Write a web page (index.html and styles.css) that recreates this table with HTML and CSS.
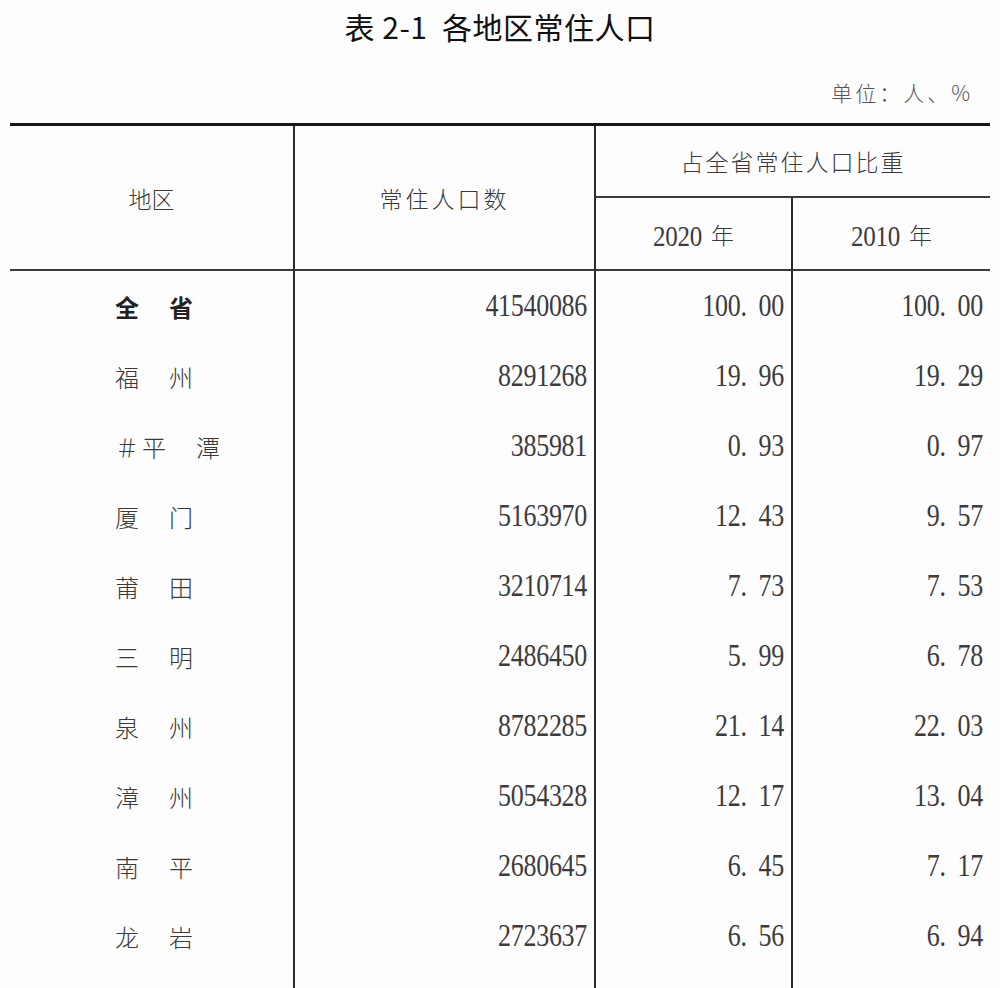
FILE: index.html
```html
<!DOCTYPE html>
<html lang="zh-CN">
<head>
<meta charset="utf-8">
<title>表 2-1 各地区常住人口</title>
<link rel="stylesheet" href="styles.css">
</head>
<body>
<h1 class="title">表 2-1&nbsp; 各地区常住人口</h1>
<div class="unit">单位：人、%</div>
<table class="pop">
  <colgroup>
    <col class="c1"><col class="c2"><col class="c3"><col class="c4">
  </colgroup>
  <thead>
    <tr class="h1">
      <th rowspan="2" class="hd bb">地区</th>
      <th rowspan="2" class="hd bl bb spaced">常住人口数</th>
      <th colspan="2" class="hd bl bb spaced1">占全省常住人口比重</th>
    </tr>
    <tr class="h2">
      <th class="hd bl bb"><span class="num">2020</span> 年</th>
      <th class="hd bl bb"><span class="num">2010</span> 年</th>
    </tr>
  </thead>
  <tbody>
    <tr><td class="lab strong">全　省</td><td class="n bl"><span class="num">41540086</span></td><td class="n bl"><span class="num">100<span class="dot">.</span>00</span></td><td class="n bl"><span class="num">100<span class="dot">.</span>00</span></td></tr>
    <tr><td class="lab">福　州</td><td class="n bl"><span class="num">8291268</span></td><td class="n bl"><span class="num">19<span class="dot">.</span>96</span></td><td class="n bl"><span class="num">19<span class="dot">.</span>29</span></td></tr>
    <tr><td class="lab">＃平　潭</td><td class="n bl"><span class="num">385981</span></td><td class="n bl"><span class="num">0<span class="dot">.</span>93</span></td><td class="n bl"><span class="num">0<span class="dot">.</span>97</span></td></tr>
    <tr><td class="lab">厦　门</td><td class="n bl"><span class="num">5163970</span></td><td class="n bl"><span class="num">12<span class="dot">.</span>43</span></td><td class="n bl"><span class="num">9<span class="dot">.</span>57</span></td></tr>
    <tr><td class="lab">莆　田</td><td class="n bl"><span class="num">3210714</span></td><td class="n bl"><span class="num">7<span class="dot">.</span>73</span></td><td class="n bl"><span class="num">7<span class="dot">.</span>53</span></td></tr>
    <tr><td class="lab">三　明</td><td class="n bl"><span class="num">2486450</span></td><td class="n bl"><span class="num">5<span class="dot">.</span>99</span></td><td class="n bl"><span class="num">6<span class="dot">.</span>78</span></td></tr>
    <tr><td class="lab">泉　州</td><td class="n bl"><span class="num">8782285</span></td><td class="n bl"><span class="num">21<span class="dot">.</span>14</span></td><td class="n bl"><span class="num">22<span class="dot">.</span>03</span></td></tr>
    <tr><td class="lab">漳　州</td><td class="n bl"><span class="num">5054328</span></td><td class="n bl"><span class="num">12<span class="dot">.</span>17</span></td><td class="n bl"><span class="num">13<span class="dot">.</span>04</span></td></tr>
    <tr><td class="lab">南　平</td><td class="n bl"><span class="num">2680645</span></td><td class="n bl"><span class="num">6<span class="dot">.</span>45</span></td><td class="n bl"><span class="num">7<span class="dot">.</span>17</span></td></tr>
    <tr><td class="lab">龙　岩</td><td class="n bl"><span class="num">2723637</span></td><td class="n bl"><span class="num">6<span class="dot">.</span>56</span></td><td class="n bl"><span class="num">6<span class="dot">.</span>94</span></td></tr>
    <tr class="filler"><td></td><td class="bl"></td><td class="bl"></td><td class="bl"></td></tr>
  </tbody>
</table>
</body>
</html>
```
FILE: styles.css
```css
html, body {
  margin: 0;
  padding: 0;
  background: #fdfdfe;
}
body {
  font-family: "Noto Sans CJK SC", "Liberation Sans", sans-serif;
  color: #333;
  overflow: hidden;
  height: 988px;
}
.title {
  margin: 0;
  height: 52px;
  line-height: 52px;
  text-align: center;
  font-size: 30px;
  font-weight: 400;
  color: #111;
  letter-spacing: 0.5px;
}
.unit {
  margin-top: 25px;
  height: 30px;
  line-height: 30px;
  text-align: right;
  padding-right: 27px;
  font-size: 21px;
  font-weight: 300;
  color: #555;
  letter-spacing: 3px;
}
.pop {
  margin-top: 16px;
  margin-left: 10px;
  width: 980px;
  table-layout: fixed;
  border-collapse: separate;
  border-spacing: 0;
  border-top: 3px solid #161616;
}
.c1 { width: 283px; }
.c2 { width: 301px; }
.c3 { width: 197px; }
.c4 { width: 199px; }
.pop th, .pop td {
  padding: 0;
  box-sizing: border-box;
}
.hd {
  font-weight: 300;
  font-size: 23px;
  color: #3a3a3a;
  text-align: center;
  vertical-align: middle;
}
.h1 { height: 72px; }
.h2 { height: 73px; }
.bl { border-left: 2px solid #2a2a2a; }
.bb { border-bottom: 2px solid #3a3a3a; }
.spaced { letter-spacing: 3px; padding-left: 3px; }
.spaced1 { letter-spacing: 2px; padding-left: 2px; }
.pop tbody tr { height: 70px; }
.pop tbody tr.filler { height: 60px; }
.lab {
  padding-left: 105px !important;
  font-size: 24px;
  font-weight: 300;
  color: #3a3a3a;
  letter-spacing: 3px;
  vertical-align: middle;
}
.lab.strong {
  font-weight: 700;
  color: #222;
}
.n {
  text-align: right;
  padding-right: 7px !important;
  vertical-align: middle;
}
.num {
  display: inline-block;
  font-family: "Liberation Serif", "Times New Roman", serif;
  font-size: 26px;
  color: #3c3c3c;
  transform: scaleY(1.25);
  letter-spacing: -0.3px;
}
.hd .num {
  font-size: 25px;
  transform: scaleY(1.2);
  margin-right: 4px;
}
.dot {
  margin-right: 12px;
}
```
